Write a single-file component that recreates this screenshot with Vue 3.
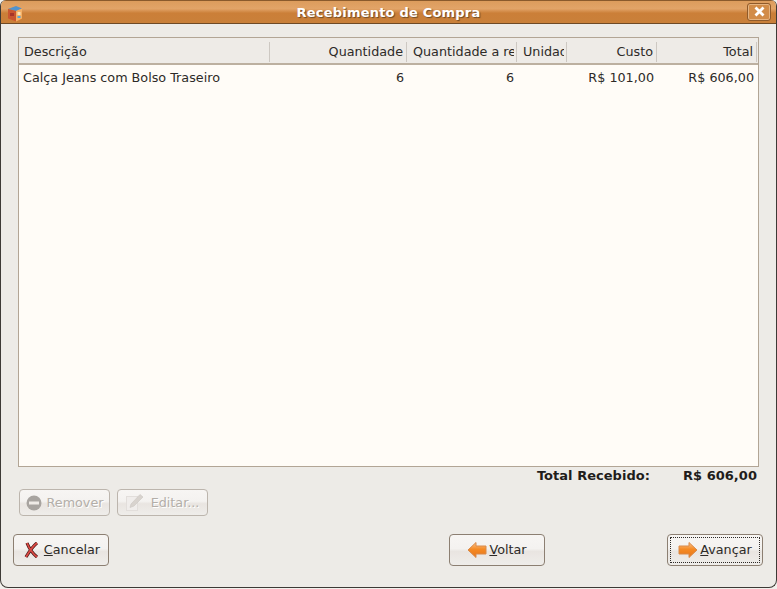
<script setup>
const columns = [
  { label: 'Descrição', width: 251, align: 'left' },
  { label: 'Quantidade', width: 137, align: 'right' },
  { label: 'Quantidade a receber', width: 110, align: 'left' },
  { label: 'Unidade', width: 50, align: 'left' },
  { label: 'Custo', width: 90, align: 'right' },
  { label: 'Total', width: 100, align: 'right' }
]

const row = [
  { value: 'Calça Jeans com Bolso Traseiro', align: 'left' },
  { value: '6', align: 'right' },
  { value: '6', align: 'right' },
  { value: '', align: 'left' },
  { value: 'R$ 101,00', align: 'right' },
  { value: 'R$ 606,00', align: 'right' }
]
</script>

<template>
  <div class="window">
    <header class="titlebar">
      <svg class="app-icon" width="16" height="17" viewBox="0 0 16 17">
        <path d="M1 4 L9 1.5 L15 3.5 L15 13.5 L9 16.5 L1 13.5 Z" fill="#e8873c" />
        <path d="M1 4 L9 1 L15 3.5 L9 6 Z" fill="#4f93cf" />
        <path d="M1 4 L9 6 L9 16.5 L1 13.5 Z" fill="#c9562f" />
        <path d="M9 6 L15 3.5 L15 13.5 L9 16.5 Z" fill="#f4b066" />
        <rect x="3" y="8" width="4" height="3" fill="#a83428" />
        <rect x="10.5" y="7" width="3" height="3" fill="#fbe3b8" />
        <rect x="10.5" y="11" width="3" height="2" fill="#5aa5d6" />
      </svg>
      <span class="title">Recebimento de Compra</span>
      <button class="close" type="button" aria-label="Fechar">
        <svg width="11" height="11" viewBox="0 0 11 11">
          <path d="M1.5 1.5 L9.5 9.5 M9.5 1.5 L1.5 9.5" stroke="#fff" stroke-width="2.8" />
        </svg>
      </button>
    </header>

    <main class="body">
      <section class="table">
        <div class="thead">
          <div
            v-for="col in columns"
            :key="col.label"
            :class="['th', `th--${col.align}`]"
            :style="{ width: col.width + 'px' }"
          >
            <span class="th__label">{{ col.label }}</span>
          </div>
        </div>
        <div class="tr">
          <div
            v-for="(cell, i) in row"
            :key="i"
            :class="['td', `td--${cell.align}`]"
            :style="{ width: columns[i].width + 'px' }"
          >{{ cell.value }}</div>
        </div>
      </section>

      <div class="summary">
        <span>Total Recebido:</span>
        <span>R$ 606,00</span>
      </div>

      <div class="row-actions">
        <button class="btn btn--disabled" type="button" disabled>
          <svg width="16" height="16" viewBox="0 0 16 16">
            <circle cx="8" cy="8" r="7.5" fill="#a8a4a0" />
            <rect x="3" y="6.5" width="10" height="3" fill="#efebe7" />
          </svg>
          <span>Remover</span>
        </button>
        <button class="btn btn--disabled btn--edit" type="button" disabled>
          <svg width="18" height="19" viewBox="0 0 18 19">
            <rect x="0.5" y="3.5" width="11" height="14" fill="#f0edeb" stroke="#e2dedb" />
            <path d="M4 14.5 L5 11 L14 1.5 L17 4 L8 13 Z" fill="#d8d3ce" stroke="#cbc6c1" stroke-width="0.6" />
          </svg>
          <span>Editar...</span>
        </button>
      </div>

      <footer class="footer">
        <button class="btn btn--large btn--cancel" type="button">
          <svg width="15" height="16" viewBox="0 0 15 16">
            <path d="M3 1 C5 6 8 11 13 15 M13 1 C9 4 5 10 2 15" fill="none" stroke="#4a1816" stroke-width="3.2" />
            <path d="M3 1 C5 6 8 11 13 15 M13 1 C9 4 5 10 2 15" fill="none" stroke="#dc4a44" stroke-width="1.7" />
          </svg>
          <span><u>C</u>ancelar</span>
        </button>
        <div class="footer__nav">
          <button class="btn btn--large btn--arrow" type="button">
            <svg width="20" height="18" viewBox="0 0 20 18">
              <defs>
                <linearGradient id="arrow-back" x1="0" y1="0" x2="0" y2="1">
                  <stop offset="0" stop-color="#fcc48a" />
                  <stop offset="0.45" stop-color="#f58a24" />
                  <stop offset="1" stop-color="#e8761a" />
                </linearGradient>
              </defs>
              <path d="M1 9 L9 1.5 L9 5 L19 5 L19 13 L9 13 L9 16.5 Z" fill="url(#arrow-back)" stroke="#d98a4a" stroke-linejoin="round" />
            </svg>
            <span><u>V</u>oltar</span>
          </button>
          <button class="btn btn--large btn--arrow btn--focus" type="button">
            <svg width="20" height="18" viewBox="0 0 20 18">
              <defs>
                <linearGradient id="arrow-next" x1="0" y1="0" x2="0" y2="1">
                  <stop offset="0" stop-color="#fcc48a" />
                  <stop offset="0.45" stop-color="#f58a24" />
                  <stop offset="1" stop-color="#e8761a" />
                </linearGradient>
              </defs>
              <path d="M19 9 L11 1.5 L11 5 L1 5 L1 13 L11 13 L11 16.5 Z" fill="url(#arrow-next)" stroke="#d98a4a" stroke-linejoin="round" />
            </svg>
            <span><u>A</u>vançar</span>
          </button>
        </div>
      </footer>
    </main>
  </div>
</template>

<style>
html,
body {
  margin: 0;
  background: #f2f0ec;
}
</style>

<style scoped>
.window {
  width: 777px;
  height: 588px;
  box-sizing: border-box;
  display: flex;
  flex-direction: column;
  background: #edebe7;
  border: 1px solid #3d3a36;
  border-top: 0;
  border-radius: 6px 6px 8px 8px;
  overflow: hidden;
  font-family: "DejaVu Sans", sans-serif;
  font-size: 12.75px;
  color: #2d2a27;
}

.titlebar {
  height: 24px;
  flex: none;
  box-sizing: border-box;
  display: flex;
  align-items: center;
  position: relative;
  padding: 0 5px 0 6px;
  background: linear-gradient(#dc9c5c 0%, #e2a468 35%, #cb7f38 55%, #c9803a 100%);
  border-top: 1px solid #8a5a2c;
  border-bottom: 1px solid #6e4a26;
}

.app-icon {
  margin-top: 2px;
}

.title {
  position: absolute;
  left: 0;
  right: 0;
  text-align: center;
  font-size: 13px;
  font-weight: bold;
  color: #fff;
  text-shadow: 1px 1px 1px #6e4a26;
  letter-spacing: 0.2px;
}

.close {
  margin-left: auto;
  margin-top: -1px;
  position: relative;
  width: 24px;
  height: 18px;
  padding: 0;
  display: flex;
  align-items: center;
  justify-content: center;
  background: #d28c48;
  border: 1px solid #8f5a2a;
  box-shadow: inset 0 0 0 1px #e6b481;
  border-radius: 3px;
}

.body {
  flex: 1;
  display: flex;
  flex-direction: column;
  padding: 13px 13px 0 12px;
  min-height: 0;
}

.table {
  height: 430px;
  flex: none;
  box-sizing: border-box;
  margin: 0 4px 0 5px;
  background: #fffcf7;
  border: 1px solid #b2a595;
}

.thead {
  display: flex;
  height: 27px;
  box-sizing: border-box;
  background: #eeebe7;
  border-bottom: 2px solid #bcb0a0;
}

.th {
  box-sizing: border-box;
  height: 20px;
  margin-top: 4px;
  padding: 0 2px 0 6px;
  border-right: 1px solid #cdc8c2;
  white-space: nowrap;
  line-height: 20px;
  flex: none;
}

.th:first-child {
  padding-left: 5px;
}

.th--right {
  padding-right: 3px;
  text-align: right;
}

.th__label {
  display: block;
  overflow: hidden;
}

.tr {
  display: flex;
  height: 24px;
  align-items: center;
}

.td {
  box-sizing: border-box;
  padding: 0 3px 0 4px;
  white-space: nowrap;
  flex: none;
}

.td--right {
  text-align: right;
}

.summary {
  display: flex;
  justify-content: flex-end;
  gap: 33px;
  margin: 1px 6px 0 0;
  height: 16px;
  line-height: 16px;
  font-size: 13px;
  font-weight: bold;
  letter-spacing: 0.03px;
  color: #1f1d1b;
}

.row-actions {
  display: flex;
  gap: 7px;
  margin: 5px 0 0 6px;
}

.btn {
  box-sizing: border-box;
  display: inline-flex;
  align-items: center;
  justify-content: center;
  gap: 5px;
  width: 91px;
  height: 27px;
  padding: 0;
  font: inherit;
  color: #2d2a27;
  background: linear-gradient(#f7f5f3 0%, #f4f2f0 45%, #e9e5e1 55%, #efedea 100%);
  border: 1px solid #8c7f72;
  border-radius: 4px;
}

.btn--disabled {
  color: #b3aea8;
  border-color: #bcb5ad;
  text-shadow: 1px 1px 0 #fff;
}

.btn--edit {
  gap: 7px;
}

.btn--large {
  width: 96px;
  height: 32px;
  padding-bottom: 1px;
}

.btn--cancel {
  padding-left: 2px;
}

.btn--arrow {
  gap: 2px;
}

.btn--focus {
  outline: 1px dotted #2d2a27;
  outline-offset: -4px;
}

.footer {
  display: flex;
  justify-content: space-between;
  margin-top: 18px;
}

.footer__nav {
  display: flex;
  gap: 122px;
}
</style>
